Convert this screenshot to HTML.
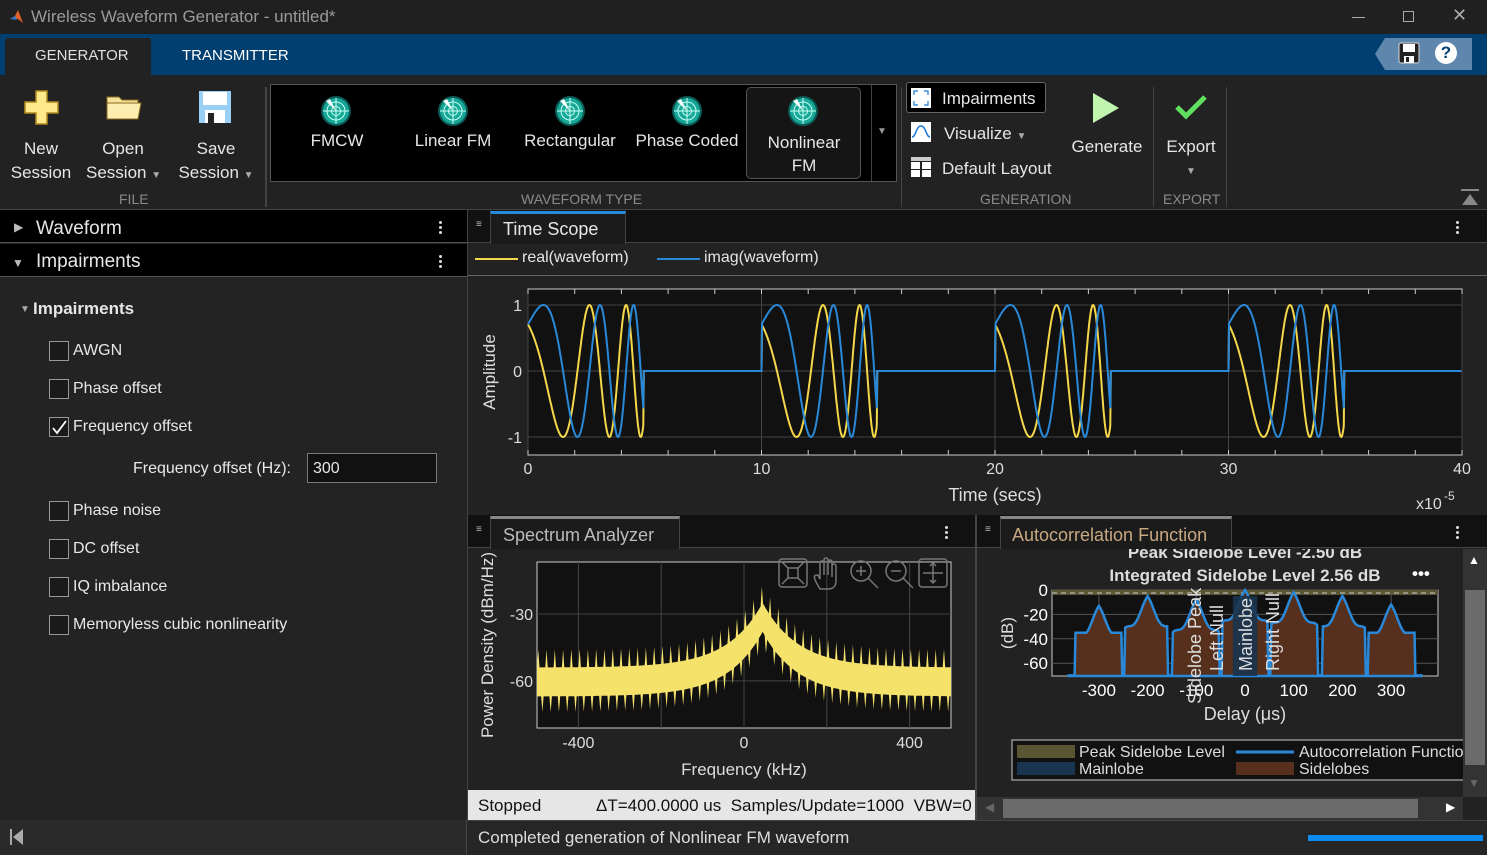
<!DOCTYPE html>
<html><head><meta charset="utf-8"><style>
*{box-sizing:border-box;margin:0;padding:0}
body{width:1487px;height:855px;overflow:hidden;background:#222;font-family:"Liberation Sans",sans-serif;color:#e6e6e6;position:relative}
.a{position:absolute}
.t{white-space:nowrap}
.cb{position:absolute;width:20px;height:20px;border:1px solid #999;background:#1a1a1a}
.lbl{position:absolute;font-size:16px;color:#e8e8e8;white-space:nowrap}
.dots{position:absolute;width:4px}
.dots i{display:block;width:3px;height:3px;background:#ddd;border-radius:50%;margin:2px 0}
.radar{position:absolute;width:32px;height:32px}
.tb{position:absolute;font-size:17px;color:#e6e6e6;text-align:center;white-space:nowrap}
.sec{position:absolute;font-size:14px;color:#8a8a8a;top:191px}
</style></head><body>
<div class="a" style="left:0;top:0;width:1487px;height:34px;background:#202020"></div>
<svg class="a" style="left:9px;top:9px" width="16" height="16"><path d="M1 10 L6 7 L9 1 L14 14 L9 10 Z" fill="#e0602a"/><path d="M1 10 L6 7 L8 11Z" fill="#2a7acc"/></svg>
<div class="a t" style="left:31px;top:7px;font-size:17px;color:#9a9a9a">Wireless Waveform Generator - untitled*</div>
<div class="a" style="left:1352px;top:17px;width:13px;height:1px;background:#aaa"></div>
<div class="a" style="left:1403px;top:11px;width:11px;height:11px;border:1px solid #aaa"></div>
<div class="a t" style="left:1452px;top:5px;font-size:18px;color:#aaa">✕</div>
<div class="a" style="left:0;top:34px;width:1487px;height:41px;background:#003f70"></div>
<div class="a" style="left:5px;top:38px;width:146px;height:37px;background:#222;border-radius:3px 3px 0 0"></div>
<div class="a t" style="left:35px;top:47px;font-size:15px;color:#e0e0e0">GENERATOR</div>
<div class="a t" style="left:182px;top:47px;font-size:15px;color:#fff">TRANSMITTER</div>
<div class="a" style="left:1385px;top:38px;width:87px;height:32px;background:#5f86ad"></div>
<div class="a" style="left:1375px;top:38px;width:0;height:0;border-top:16px solid transparent;border-bottom:16px solid transparent;border-right:10px solid #5f86ad"></div>
<svg class="a" style="left:1398px;top:42px" width="22" height="22"><rect x="1" y="1" width="20" height="20" rx="2" fill="#222" stroke="#ddd"/><rect x="5" y="2" width="12" height="8" fill="#fff"/><rect x="6" y="14" width="10" height="7" fill="#fff"/><rect x="8" y="15" width="3" height="5" fill="#222"/></svg>
<div class="a" style="left:1435px;top:42px;width:22px;height:22px;border-radius:50%;background:#fff;color:#003f70;font-weight:bold;font-size:17px;text-align:center;line-height:22px">?</div>
<div class="a" style="left:0;top:75px;width:1487px;height:134px;background:#222"></div>
<svg class="a" style="left:24px;top:90px" width="36" height="36"><path d="M12 1h11v11h11v11H23v11H12V23H1V12h11z" fill="#ffe98a" stroke="#b08a20" stroke-width="1.5"/></svg>
<div class="tb" style="left:8px;top:137px;width:66px;line-height:24px">New<br>Session</div>
<svg class="a" style="left:106px;top:92px" width="36" height="30"><path d="M1 5h12l3 3h16v19H1z" fill="#f5e39a" stroke="#8a6a20"/><path d="M1 11h34l-3 16H1z" fill="#fdeeb0" stroke="#8a6a20"/></svg>
<div class="tb" style="left:86px;top:137px;width:74px;line-height:24px">Open<br>Session <span style="font-size:10px;color:#aaa">▼</span></div>
<svg class="a" style="left:198px;top:90px" width="34" height="34"><rect x="1" y="1" width="32" height="32" fill="#9ad0f5"/><rect x="5" y="2" width="24" height="13" fill="#fff"/><rect x="7" y="20" width="20" height="13" fill="#fff"/><rect x="10" y="23" width="6" height="10" fill="#222"/></svg>
<div class="tb" style="left:172px;top:137px;width:88px;line-height:24px">Save<br>Session <span style="font-size:10px;color:#aaa">▼</span></div>
<div class="sec" style="left:119px">FILE</div>
<div class="a" style="left:265px;top:87px;width:2px;height:120px;background:#444"></div>
<div class="a" style="left:270px;top:84px;width:627px;height:98px;background:#000;border:1px solid #555"></div>
<div class="a" style="left:871px;top:85px;width:1px;height:96px;background:#444"></div>
<div class="a t" style="left:877px;top:126px;font-size:10px;color:#999">▼</div>
<div class="a" style="left:746px;top:87px;width:115px;height:92px;background:#151515;border:1px solid #555;border-radius:5px"></div>
<div class="tb" style="left:290px;top:131px;width:94px">FMCW</div>
<div class="tb" style="left:400px;top:131px;width:106px">Linear FM</div>
<div class="tb" style="left:517px;top:131px;width:106px">Rectangular</div>
<div class="tb" style="left:632px;top:131px;width:110px">Phase Coded</div>
<div class="tb" style="left:750px;top:131px;width:108px;line-height:23px">Nonlinear<br>FM</div>
<div class="sec" style="left:521px">WAVEFORM TYPE</div>
<div class="a" style="left:901px;top:87px;width:1px;height:120px;background:#444"></div>
<div class="a" style="left:906px;top:82px;width:140px;height:31px;background:#000;border:1px solid #666;border-radius:3px"></div>
<svg class="a" style="left:911px;top:88px" width="20" height="20"><rect width="20" height="20" fill="#fff"/><path d="M3 7V3h4M13 3h4v4M17 13v4h-4M7 17H3v-4" fill="none" stroke="#1a7ad4" stroke-width="1.2"/></svg>
<div class="a t" style="left:942px;top:89px;font-size:17px">Impairments</div>
<svg class="a" style="left:911px;top:122px" width="20" height="20"><rect width="20" height="20" fill="#fff"/><path d="M1 15C5 15 5 4 10 4S15 15 19 15" fill="none" stroke="#1a7ad4" stroke-width="1.5"/></svg>
<div class="a t" style="left:944px;top:124px;font-size:17px">Visualize <span style="font-size:10px;color:#aaa">▼</span></div>
<svg class="a" style="left:911px;top:157px" width="20" height="20"><rect width="20" height="4" fill="#ccc"/><rect y="5" width="9" height="7" fill="#fff"/><rect x="11" y="5" width="9" height="7" fill="#fff"/><rect y="13" width="9" height="7" fill="#fff"/><rect x="11" y="13" width="9" height="7" fill="#fff"/></svg>
<div class="a t" style="left:942px;top:159px;font-size:17px">Default Layout</div>
<svg class="a" style="left:1092px;top:92px" width="28" height="32"><path d="M1 1L27 16L1 31Z" fill="#c0f5b0"/></svg>
<div class="tb" style="left:1066px;top:137px;width:82px">Generate</div>
<div class="sec" style="left:980px">GENERATION</div>
<div class="a" style="left:1153px;top:87px;width:1px;height:120px;background:#444"></div>
<svg class="a" style="left:1174px;top:94px" width="34" height="26"><path d="M3 13L12 22L31 3" fill="none" stroke="#60e060" stroke-width="5"/></svg>
<div class="tb" style="left:1160px;top:137px;width:62px">Export</div>
<div class="a t" style="left:1186px;top:166px;font-size:10px;color:#aaa">▼</div>
<div class="sec" style="left:1163px">EXPORT</div>
<div class="a" style="left:1226px;top:87px;width:1px;height:120px;background:#444"></div>
<svg class="a" style="left:1461px;top:189px" width="18" height="16"><rect width="18" height="2" fill="#888"/><path d="M1 16L9 5L17 16Z" fill="#888"/></svg>
<div class="a" style="left:0;top:209px;width:1487px;height:1px;background:#444"></div>
<div class="a" style="left:0;top:210px;width:467px;height:610px;background:#232323"></div>
<div class="a" style="left:0;top:210px;width:467px;height:33px;background:#000;border-bottom:1px solid #555"></div>
<div class="a" style="left:0;top:244px;width:467px;height:33px;background:#000;border-bottom:1px solid #555"></div>
<div class="a t" style="left:14px;top:220px;font-size:12px;color:#bbb">▶</div>
<div class="a t" style="left:36px;top:218px;font-size:19px">Waveform</div>
<div class="a t" style="left:12px;top:256px;font-size:12px;color:#bbb">▼</div>
<div class="a t" style="left:36px;top:251px;font-size:19px">Impairments</div>
<div class="dots" style="left:439px;top:219px"><i></i><i></i><i></i></div>
<div class="dots" style="left:439px;top:253px"><i></i><i></i><i></i></div>
<div class="a t" style="left:20px;top:304px;font-size:10px;color:#aaa">▼</div>
<div class="a t" style="left:33px;top:299px;font-size:17px;font-weight:bold">Impairments</div>
<div class="cb" style="left:49px;top:341px"></div><div class="lbl" style="left:73px;top:342px">AWGN</div>
<div class="cb" style="left:49px;top:379px"></div><div class="lbl" style="left:73px;top:380px">Phase offset</div>
<div class="cb" style="left:49px;top:417px"></div><div class="lbl" style="left:73px;top:418px">Frequency offset</div>
<svg class="a" style="left:51px;top:419px" width="17" height="17"><path d="M2 9L6 14L15 2" fill="none" stroke="#fff" stroke-width="1.8"/></svg>
<div class="lbl" style="left:133px;top:460px">Frequency offset (Hz):</div>
<div class="a" style="left:307px;top:453px;width:130px;height:30px;background:#111;border:1px solid #777"></div>
<div class="lbl" style="left:313px;top:460px">300</div>
<div class="cb" style="left:49px;top:501px"></div><div class="lbl" style="left:73px;top:502px">Phase noise</div>
<div class="cb" style="left:49px;top:539px"></div><div class="lbl" style="left:73px;top:540px">DC offset</div>
<div class="cb" style="left:49px;top:577px"></div><div class="lbl" style="left:73px;top:578px">IQ imbalance</div>
<div class="cb" style="left:49px;top:615px"></div><div class="lbl" style="left:73px;top:616px">Memoryless cubic nonlinearity</div>
<div class="a" style="left:467px;top:210px;width:1px;height:610px;background:#444"></div>
<div class="a" style="left:0;top:820px;width:1487px;height:35px;background:#262626;border-top:1px solid #444"></div>
<div class="a" style="left:0;top:820px;width:467px;height:35px;background:#2a2a2a;border-right:1px solid #444"></div>
<svg class="a" style="left:10px;top:829px" width="14" height="16"><rect x="0" y="0" width="2" height="16" fill="#aaa"/><path d="M13 0L3 8L13 16Z" fill="#aaa"/></svg>
<div class="a t" style="left:478px;top:828px;font-size:17px;color:#ddd">Completed generation of Nonlinear FM waveform</div>
<div class="a" style="left:1308px;top:835px;width:175px;height:6px;background:#0a8cf0"></div>
<div class="a" style="left:468px;top:210px;width:1019px;height:303px;background:#222"></div>
<div class="a" style="left:468px;top:210px;width:1019px;height:33px;background:#111;border-bottom:1px solid #444"></div>
<div class="a t" style="left:476px;top:219px;font-size:10px;color:#bbb">≡</div>
<div class="a" style="left:490px;top:211px;width:136px;height:33px;background:#1b1b1b;border-top:3px solid #2a88d8;border-left:1px solid #444;border-right:1px solid #444"></div>
<div class="a t" style="left:503px;top:219px;font-size:18px">Time Scope</div>
<div class="dots" style="left:1456px;top:219px"><i></i><i></i><i></i></div>
<div class="a" style="left:468px;top:275px;width:1019px;height:1px;background:#666"></div>
<div class="a" style="left:475px;top:258px;width:43px;height:2px;background:#f5d74a"></div>
<div class="a t" style="left:522px;top:249px;font-size:16px">real(waveform)</div>
<div class="a" style="left:657px;top:258px;width:43px;height:2px;background:#2a88d8"></div>
<div class="a t" style="left:704px;top:249px;font-size:16px">imag(waveform)</div>
<svg class="a" id="ts" style="left:468px;top:276px" width="1019" height="237"></svg>
<div class="a" style="left:468px;top:515px;width:508px;height:305px;background:#222"></div>
<div class="a" style="left:468px;top:515px;width:508px;height:33px;background:#111;border-bottom:1px solid #444"></div>
<div class="a t" style="left:476px;top:524px;font-size:10px;color:#bbb">≡</div>
<div class="a" style="left:490px;top:516px;width:190px;height:33px;background:#1b1b1b;border-top:3px solid #888;border-left:1px solid #444;border-right:1px solid #444"></div>
<div class="a t" style="left:503px;top:525px;font-size:18px;color:#bbb">Spectrum Analyzer</div>
<div class="dots" style="left:945px;top:524px"><i></i><i></i><i></i></div>
<svg class="a" id="sa" style="left:468px;top:549px" width="508" height="241"></svg>
<div class="a" style="left:468px;top:790px;width:508px;height:30px;background:#e6e6e6"></div>
<div class="a t" style="left:478px;top:796px;font-size:17px;color:#111">Stopped</div>
<div class="a t" style="left:596px;top:796px;font-size:17px;color:#111;width:380px;overflow:hidden">ΔT=400.0000 us&nbsp; Samples/Update=1000&nbsp; VBW=0</div>
<div class="a" style="left:975px;top:515px;width:2px;height:305px;background:#444"></div>
<div class="a" style="left:977px;top:515px;width:510px;height:305px;background:#222"></div>
<div class="a" style="left:977px;top:515px;width:510px;height:33px;background:#111;border-bottom:1px solid #444"></div>
<div class="a t" style="left:985px;top:524px;font-size:10px;color:#bbb">≡</div>
<div class="a" style="left:1000px;top:516px;width:232px;height:33px;background:#1b1b1b;border-top:3px solid #888;border-left:1px solid #444;border-right:1px solid #444"></div>
<div class="a t" style="left:1012px;top:525px;font-size:18px;color:#c8a880">Autocorrelation Function</div>
<div class="dots" style="left:1456px;top:524px"><i></i><i></i><i></i></div>
<svg class="a" id="ac" style="left:977px;top:549px" width="486" height="248"></svg>
<div class="a" style="left:1463px;top:549px;width:24px;height:248px;background:#333"></div>
<div class="a" style="left:1465px;top:590px;width:20px;height:175px;background:#6b6b6b"></div>
<div class="a t" style="left:1468px;top:553px;font-size:12px;color:#fff">▲</div>
<div class="a t" style="left:1468px;top:776px;font-size:12px;color:#666">▼</div>
<div class="a" style="left:977px;top:797px;width:486px;height:23px;background:#333"></div>
<div class="a" style="left:1003px;top:799px;width:415px;height:19px;background:#6b6b6b"></div>
<div class="a t" style="left:985px;top:800px;font-size:12px;color:#666">◀</div>
<div class="a t" style="left:1446px;top:800px;font-size:12px;color:#fff">▶</div>
<script>
var NS="http://www.w3.org/2000/svg";
function el(svg,tag,at,txt){var e=document.createElementNS(NS,tag);for(var k in at)e.setAttribute(k,at[k]);if(txt!==undefined)e.textContent=txt;svg.appendChild(e);return e;}
[320,437,554,671,787].forEach(function(x){var s=document.createElementNS(NS,'svg');s.setAttribute('width',32);s.setAttribute('height',32);s.setAttribute('class','radar');s.style.left=x+'px';s.style.top='95px';document.body.appendChild(s);
el(s,'circle',{cx:16,cy:16,r:15,fill:'#0c5a55'});el(s,'circle',{cx:16,cy:16,r:13,fill:'#17a898'});
el(s,'circle',{cx:16,cy:16,r:9,fill:'none',stroke:'#c8fff5','stroke-width':1});el(s,'circle',{cx:16,cy:16,r:4.5,fill:'none',stroke:'#c8fff5','stroke-width':1});
el(s,'path',{d:'M16 3V29M3 16H29',stroke:'#c8fff5','stroke-width':1});el(s,'path',{d:'M16 16L6 6L10 4Z',fill:'#fff'});});
(function(){var s=document.getElementById('ts');var X0=60,X1=994;
el(s,'rect',{x:X0,y:13,width:X1-X0,height:166,fill:'#111',stroke:'#ccc','stroke-width':1});
[0,10,20,30,40].forEach(function(v){var x=X0+v*(X1-X0)/40;el(s,'line',{x1:x,y1:13,x2:x,y2:179,stroke:'#444'});el(s,'text',{x:x,y:198,fill:'#ddd','font-size':16,'text-anchor':'middle','font-family':'Liberation Sans'},v);});
[[1,29],[0,95],[-1,161]].forEach(function(a){el(s,'line',{x1:X0,y1:a[1],x2:X1,y2:a[1],stroke:'#444'});el(s,'text',{x:X0-6,y:a[1]+6,fill:'#ddd','font-size':16,'text-anchor':'end','font-family':'Liberation Sans'},a[0]);});
for(var i=0;i<=40;i+=2){var x=X0+i*(X1-X0)/40;el(s,'line',{x1:x,y1:13,x2:x,y2:18,stroke:'#ccc'});el(s,'line',{x1:x,y1:174,x2:x,y2:179,stroke:'#ccc'});}
var re='',im='';function xp(t){return X0+t*(X1-X0)/40;}function yp(v){return 95-v*66;}
for(var t=0;t<=40;t+=0.02){var tt=t%10,r=0,m=0;if(tt<4.95){var ph=0.785+0.885*tt+0.457*tt*tt;r=Math.cos(ph);m=Math.sin(ph);}
re+=(re?'L':'M')+xp(t).toFixed(1)+' '+yp(r).toFixed(1);im+=(im?'L':'M')+xp(t).toFixed(1)+' '+yp(m).toFixed(1);}
el(s,'path',{d:re,fill:'none',stroke:'#f5d74a','stroke-width':2});el(s,'path',{d:im,fill:'none',stroke:'#2a88d8','stroke-width':2});
el(s,'text',{x:27,y:96,fill:'#ddd','font-size':17,'text-anchor':'middle',transform:'rotate(-90 27 96)','font-family':'Liberation Sans'},'Amplitude');
el(s,'text',{x:527,y:225,fill:'#ddd','font-size':18,'text-anchor':'middle','font-family':'Liberation Sans'},'Time (secs)');
el(s,'text',{x:948,y:233,fill:'#ddd','font-size':16,'font-family':'Liberation Sans'},'x10');el(s,'text',{x:976,y:224,fill:'#ddd','font-size':12,'font-family':'Liberation Sans'},'-5');
})();
(function(){var s=document.getElementById('sa');var X0=69,X1=483,T=13,B=179;
el(s,'rect',{x:X0,y:T,width:X1-X0,height:B-T,fill:'#111',stroke:'#ccc'});
function fx(f){return X0+(f+500)*(X1-X0)/1000;}function dy(d){return 65-(d+30)*2.23;}
[-400,-200,0,200,400].forEach(function(f){el(s,'line',{x1:fx(f),y1:T,x2:fx(f),y2:B,stroke:'#444'});});
[-30,-60].forEach(function(v){el(s,'line',{x1:X0,y1:dy(v),x2:X1,y2:dy(v),stroke:'#444'});el(s,'text',{x:X0-4,y:dy(v)+6,fill:'#ddd','font-size':16,'text-anchor':'end','font-family':'Liberation Sans'},v);});
[-400,0,400].forEach(function(f){el(s,'text',{x:fx(f),y:199,fill:'#ddd','font-size':16,'text-anchor':'middle','font-family':'Liberation Sans'},f);});
function env(f){var a=Math.abs(f-45);return -17-29*(1-Math.exp(-a/85));}
var top='',bot='';
for(var f=-500;f<=500;f+=1){var sp=((f+500)%20+20)%20;var e=env(f);var spike=sp<6?(1-Math.abs(sp-3)/3):0;
var tv=e-8+8*spike;top+=(top?'L':'M')+fx(f).toFixed(1)+' '+Math.max(T+1,dy(tv)).toFixed(1);}
for(var f=500;f>=-500;f-=1){var sp=((f+500)%20+20)%20;var e=env(f);var spike=(sp>=10&&sp<16)?(1-Math.abs(sp-13)/3):0;
var bv=e-21-7*spike;bot+='L'+fx(f).toFixed(1)+' '+Math.min(B-1,dy(bv)).toFixed(1);}
el(s,'path',{d:top+bot+'Z',fill:'#f5e26a'});
el(s,'text',{x:25,y:96,fill:'#ddd','font-size':17,'text-anchor':'middle',transform:'rotate(-90 25 96)','font-family':'Liberation Sans'},'Power Density (dBm/Hz)');
el(s,'text',{x:276,y:226,fill:'#ddd','font-size':17,'text-anchor':'middle','font-family':'Liberation Sans'},'Frequency (kHz)');
var ic='stroke:#777;fill:none;stroke-width:1.5';
el(s,'rect',{x:311,y:10,width:28,height:28,rx:3,style:ic});el(s,'rect',{x:320,y:19,width:10,height:10,style:ic});el(s,'path',{d:'M314 13l6 6M336 13l-6 6M314 35l6-6M336 35l-6-6',style:ic});
el(s,'rect',{x:451,y:10,width:28,height:28,rx:3,style:ic});el(s,'path',{d:'M465 14v20M455 24h20M462 17l3-3 3 3M462 31l3 3 3-3',style:ic});
el(s,'circle',{cx:393,cy:22,r:10,style:ic});el(s,'line',{x1:400,y1:29,x2:410,y2:39,style:ic});el(s,'path',{d:'M388 22h10M393 17v10',style:ic});
el(s,'circle',{cx:428,cy:22,r:10,style:ic});el(s,'line',{x1:435,y1:29,x2:445,y2:39,style:ic});el(s,'path',{d:'M423 22h10',style:ic});
el(s,'path',{d:'M352 40 C346 30 344 26 350 26 L352 30 V14 a2 2 0 0 1 4 0 V26 V11 a2 2 0 0 1 4 0 V26 V13 a2 2 0 0 1 4 0 V28 V17 a2 2 0 0 1 4 0 V32 C368 38 364 40 360 40Z',style:ic});
})();
(function(){var s=document.getElementById('ac');var X0=75,X1=461,T=41,B=127;
el(s,'rect',{x:X0,y:T,width:X1-X0,height:B-T,fill:'#111',stroke:'#ccc'});
function dx(u){return 268+u*0.487;}function dy(d){return 41+(-d)*1.22;}
[-300,-200,-100,0,100,200,300].forEach(function(u){el(s,'line',{x1:dx(u),y1:T,x2:dx(u),y2:B,stroke:'#555'});});
[0,-20,-40,-60].forEach(function(v){el(s,'line',{x1:X0,y1:dy(v),x2:X1,y2:dy(v),stroke:'#555'});el(s,'text',{x:X0-4,y:dy(v)+6,fill:'#fff','font-size':17,'text-anchor':'end','font-family':'Liberation Sans'},v);});
el(s,'rect',{x:X0,y:T,width:X1-X0,height:5,fill:'#5a5532'});
el(s,'line',{x1:X0,y1:dy(-2.5),x2:X1,y2:dy(-2.5),stroke:'#ccc','stroke-dasharray':'5 4'});
var pk=[[-300,-13],[-200,-5],[-100,-8],[0,0],[100,-2],[200,-5],[300,-12]];
var path='M'+dx(-362)+' '+B;
for(var u=-362;u<=362;u+=2){var best=-70;pk.forEach(function(p){var w=Math.abs(u-p[0]);var v=p[1]-w*0.55+4*Math.cos(w/8)-4;if(w<50)best=Math.max(best,v);});
var seg=Math.abs(u);if(Math.abs(seg-250)<4||Math.abs(seg-155)<4||Math.abs(seg-50)<3)best=-70;if(best<-35&&best>-70)best=-35;
path+='L'+dx(u).toFixed(1)+' '+dy(best).toFixed(1);}
path+='L'+dx(362)+' '+B+'Z';
el(s,'path',{d:path,fill:'#56301c',stroke:'#2a88d8','stroke-width':2.5});
el(s,'rect',{x:dx(-25),y:dy(-5),width:dx(25)-dx(-25),height:B-dy(-5),fill:'#1a3550',opacity:0.9});
el(s,'text',{x:268,y:9,fill:'#ddd','font-size':17,'font-weight':'bold','text-anchor':'middle','font-family':'Liberation Sans'},'Peak Sidelobe Level -2.50 dB');
el(s,'text',{x:268,y:32,fill:'#ddd','font-size':17,'font-weight':'bold','text-anchor':'middle','font-family':'Liberation Sans'},'Integrated Sidelobe Level 2.56 dB');
el(s,'text',{x:435,y:30,fill:'#fff','font-size':17,'font-weight':'bold','font-family':'Liberation Sans'},'•••');
[-300,-200,-100,0,100,200,300].forEach(function(u){el(s,'text',{x:dx(u),y:147,fill:'#fff','font-size':17,'text-anchor':'middle','font-family':'Liberation Sans'},u);});
el(s,'text',{x:268,y:171,fill:'#ddd','font-size':18,'text-anchor':'middle','font-family':'Liberation Sans'},'Delay (μs)');
el(s,'text',{x:36,y:84,fill:'#ddd','font-size':17,'text-anchor':'middle',transform:'rotate(-90 36 84)','font-family':'Liberation Sans'},'(dB)');
[['Sidelobe Peak',224,155],['Left Null',246,122],['Mainlobe',275,122],['Right Null',302,122]].forEach(function(a){el(s,'text',{x:a[1],y:a[2],fill:'#ddd','font-size':18,transform:'rotate(-90 '+a[1]+' '+a[2]+')','font-family':'Liberation Sans'},a[0]);});
el(s,'rect',{x:35,y:191,width:455,height:40,fill:'#111',stroke:'#ccc'});
el(s,'rect',{x:40,y:196,width:58,height:13,fill:'#5a5532'});el(s,'rect',{x:40,y:213,width:58,height:13,fill:'#1a3550'});
el(s,'rect',{x:259,y:213,width:58,height:13,fill:'#56301c'});el(s,'line',{x1:259,y1:203,x2:317,y2:203,stroke:'#2a88d8','stroke-width':3});
el(s,'text',{x:102,y:208,fill:'#ddd','font-size':16,'font-family':'Liberation Sans'},'Peak Sidelobe Level');
el(s,'text',{x:102,y:225,fill:'#ddd','font-size':16,'font-family':'Liberation Sans'},'Mainlobe');
el(s,'text',{x:322,y:208,fill:'#ddd','font-size':16,'font-family':'Liberation Sans'},'Autocorrelation Function');
el(s,'text',{x:322,y:225,fill:'#ddd','font-size':16,'font-family':'Liberation Sans'},'Sidelobes');
})();
</script>
</body></html>
